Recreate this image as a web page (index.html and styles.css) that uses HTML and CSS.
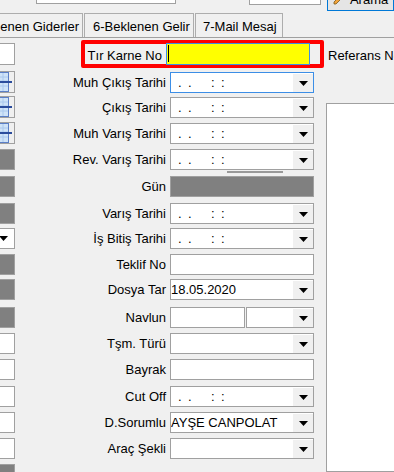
FILE: index.html
```html
<!DOCTYPE html>
<html lang="tr">
<head>
    <meta charset="UTF-8">
    <meta name="viewport" content="width=device-width, initial-scale=1.0">
    <title>Dosya Kartı</title>
    <link rel="stylesheet" href="styles.css">
</head>
<body>
<div class="toolbar">
    <div class="tb-box tb-wide"></div>
    <div class="tb-box tb-small"></div>
    <button class="tb-btn">
        <svg width="10" height="10" viewBox="0 0 10 10"><path d="M1 9 L3 9 L9 3 L7 1 L1 7 Z" fill="#f2a33a" stroke="#7a5a20" stroke-width="0.8"/></svg>
        <span>Arama</span>
    </button>
</div>

<div class="tabs">
    <div class="tab tab-first">5-Beklenen Giderler</div>
    <div class="tab tab-gelir">6-Beklenen Gelir</div>
    <div class="tab tab-mail">7-Mail Mesaj</div>
</div>

<div class="panel">
    <div class="form">
        <!-- 1 -->
        <div class="row h29">
            <div class="lb lb-white tall"></div>
            <div class="highlight">
                <div class="lbl">Tır Karne No</div>
                <div class="txt active"><span class="caret"></span></div>
            </div>
        </div>
        <!-- 2 -->
        <div class="row h25">
            <div class="lb lb-icon tall">
                <svg width="14" height="20" viewBox="0 0 14 20"><rect x="-4" y="0.5" width="12.5" height="19" fill="#cfe3f8" stroke="#5b7fc7"/><path d="M0 5h8M0 9h8M0 14h8M3 1v18" stroke="#aac8ee"/><rect x="0" y="9" width="12" height="2" fill="#2b4c9c"/></svg>
            </div>
            <div class="lbl">Muh Çıkış Tarihi</div>
            <div class="combo focus"><span class="val mask"><i>.</i><i>.</i><i>:</i><i>:</i></span><span class="btn"><svg width="9" height="5" viewBox="0 0 9 5"><polygon points="0,0 9,0 4.5,5" fill="#000"/></svg></span></div>
        </div>
        <!-- 3 -->
        <div class="row">
            <div class="lb lb-icon tall">
                <svg width="14" height="20" viewBox="0 0 14 20"><rect x="-4" y="0.5" width="12.5" height="19" fill="#cfe3f8" stroke="#5b7fc7"/><path d="M0 5h8M0 9h8M0 14h8M3 1v18" stroke="#aac8ee"/><rect x="0" y="9" width="12" height="2" fill="#2b4c9c"/></svg>
            </div>
            <div class="lbl">Çıkış Tarihi</div>
            <div class="combo"><span class="val mask"><i>.</i><i>.</i><i>:</i><i>:</i></span><span class="btn"><svg width="9" height="5" viewBox="0 0 9 5"><polygon points="0,0 9,0 4.5,5" fill="#000"/></svg></span></div>
        </div>
        <!-- 4 -->
        <div class="row">
            <div class="lb lb-icon tall">
                <svg width="14" height="20" viewBox="0 0 14 20"><rect x="-4" y="0.5" width="12.5" height="19" fill="#cfe3f8" stroke="#5b7fc7"/><path d="M0 5h8M0 9h8M0 14h8M3 1v18" stroke="#aac8ee"/><rect x="0" y="9" width="12" height="2" fill="#2b4c9c"/></svg>
            </div>
            <div class="lbl">Muh Varış Tarihi</div>
            <div class="combo"><span class="val mask"><i>.</i><i>.</i><i>:</i><i>:</i></span><span class="btn"><svg width="9" height="5" viewBox="0 0 9 5"><polygon points="0,0 9,0 4.5,5" fill="#000"/></svg></span></div>
        </div>
        <!-- 5 -->
        <div class="row h27">
            <div class="lb lb-grey"></div>
            <div class="lbl">Rev. Varış Tarihi</div>
            <div class="stack">
                <div class="combo"><span class="val mask"><i>.</i><i>.</i><i>:</i><i>:</i></span><span class="btn"><svg width="9" height="5" viewBox="0 0 9 5"><polygon points="0,0 9,0 4.5,5" fill="#000"/></svg></span></div>
                <div class="under-bar"></div>
            </div>
        </div>
        <!-- 6 -->
        <div class="row h27">
            <div class="lb lb-grey"></div>
            <div class="lbl">Gün</div>
            <div class="txt grey"></div>
        </div>
        <!-- 7 -->
        <div class="row h25">
            <div class="lb lb-grey"></div>
            <div class="lbl">Varış Tarihi</div>
            <div class="combo"><span class="val mask"><i>.</i><i>.</i><i>:</i><i>:</i></span><span class="btn"><svg width="9" height="5" viewBox="0 0 9 5"><polygon points="0,0 9,0 4.5,5" fill="#000"/></svg></span></div>
        </div>
        <!-- 8 -->
        <div class="row">
            <div class="lb lb-drop"><svg width="9" height="5" viewBox="0 0 9 5"><polygon points="0,0 9,0 4.5,5" fill="#000"/></svg></div>
            <div class="lbl">İş Bitiş Tarihi</div>
            <div class="combo"><span class="val mask"><i>.</i><i>.</i><i>:</i><i>:</i></span><span class="btn"><svg width="9" height="5" viewBox="0 0 9 5"><polygon points="0,0 9,0 4.5,5" fill="#000"/></svg></span></div>
        </div>
        <!-- 9 -->
        <div class="row h25">
            <div class="lb lb-grey"></div>
            <div class="lbl">Teklif No</div>
            <div class="txt"></div>
        </div>
        <!-- 10 -->
        <div class="row h28">
            <div class="lb lb-grey"></div>
            <div class="lbl">Dosya Tar</div>
            <div class="combo"><span class="val">18.05.2020</span><span class="btn"><svg width="9" height="5" viewBox="0 0 9 5"><polygon points="0,0 9,0 4.5,5" fill="#000"/></svg></span></div>
        </div>
        <!-- 11 -->
        <div class="row">
            <div class="lb lb-grey"></div>
            <div class="lbl">Navlun</div>
            <div class="txt navlun"></div>
            <div class="combo currency"><span class="val"></span><span class="btn"><svg width="9" height="5" viewBox="0 0 9 5"><polygon points="0,0 9,0 4.5,5" fill="#000"/></svg></span></div>
        </div>
        <!-- 12 -->
        <div class="row">
            <div class="lb lb-white"></div>
            <div class="lbl">Tşm. Türü</div>
            <div class="combo"><span class="val"></span><span class="btn"><svg width="9" height="5" viewBox="0 0 9 5"><polygon points="0,0 9,0 4.5,5" fill="#000"/></svg></span></div>
        </div>
        <!-- 13 -->
        <div class="row h27">
            <div class="lb lb-white"></div>
            <div class="lbl">Bayrak</div>
            <div class="txt"></div>
        </div>
        <!-- 14 -->
        <div class="row">
            <div class="lb lb-white"></div>
            <div class="lbl">Cut Off</div>
            <div class="combo"><span class="val mask"><i>.</i><i>.</i><i>:</i><i>:</i></span><span class="btn"><svg width="9" height="5" viewBox="0 0 9 5"><polygon points="0,0 9,0 4.5,5" fill="#000"/></svg></span></div>
        </div>
        <!-- 15 -->
        <div class="row">
            <div class="lb lb-white"></div>
            <div class="lbl">D.Sorumlu</div>
            <div class="combo"><span class="val">AYŞE CANPOLAT</span><span class="btn"><svg width="9" height="5" viewBox="0 0 9 5"><polygon points="0,0 9,0 4.5,5" fill="#000"/></svg></span></div>
        </div>
        <!-- 16 -->
        <div class="row">
            <div class="lb lb-white"></div>
            <div class="lbl">Araç Şekli</div>
            <div class="combo"><span class="val"></span><span class="btn"><svg width="9" height="5" viewBox="0 0 9 5"><polygon points="0,0 9,0 4.5,5" fill="#000"/></svg></span></div>
        </div>
        <!-- 17 -->
        <div class="row">
            <div class="lb lb-grey"></div>
        </div>
    </div>

    <div class="side">
        <div class="side-lbl">Referans No</div>
        <div class="memo"></div>
    </div>
</div>
</body>
</html>
```

FILE: styles.css
```css
body {
    margin: 0;
    height: 472px;
    overflow: hidden;
    background-color: #f0f0f0;
    font-family: "Liberation Sans", Arial, sans-serif;
    font-size: 13px;
    color: #000;
}

/* ust arac cubugu (ustu kesik) */
.toolbar {
    display: flex;
    align-items: flex-start;
    height: 13px;
}
.tb-box {
    box-sizing: border-box;
    height: 23px;
    background-color: #fff;
    border: 1px solid #a0a0a0;
}
.tb-wide {
    margin: -19px 0 0 36px;
    width: 147px;
}
.tb-small {
    margin: -18px 0 0 73px;
    width: 75px;
}
.tb-btn {
    box-sizing: border-box;
    display: flex;
    align-items: flex-end;
    margin: -17px 0 0 6px;
    width: 70px;
    height: 28px;
    padding: 0 0 0 5px;
    background-color: #e5e5e5;
    border: 1px solid #0078d7;
    font: inherit;
    color: #000;
}
.tb-btn svg {
    margin-bottom: 5px;
}
.tb-btn span {
    margin: 0 0 3px 7px;
    line-height: 15px;
}

/* sekmeler */
.tabs {
    display: flex;
    height: 24px;
}
.tab {
    box-sizing: border-box;
    height: 24px;
    padding-top: 3px;
    line-height: 20px;
    border: 1px solid #adadad;
    border-bottom: none;
    white-space: nowrap;
    overflow: hidden;
}
.tab-first {
    width: 130px;
    margin-left: -47px;
    text-align: right;
    padding-right: 3px;
}
.tab-gelir {
    width: 110px;
    margin-left: 1px;
    padding-left: 8px;
}
.tab-mail {
    width: 88px;
    margin-left: 1px;
    padding-left: 7px;
}

.panel {
    display: flex;
    border-top: 1px solid #a0a0a0;
    padding-top: 5px;
}

/* form satirlari */
.form {
    width: 326px;
    flex: none;
}
.row {
    display: flex;
    align-items: flex-start;
    height: 26px;
}
.row.h25 { height: 25px; }
.row.h27 { height: 27px; }
.row.h28 { height: 28px; }
.row.h29 { height: 29px; }

.lb {
    box-sizing: border-box;
    width: 46px;
    height: 21px;
    margin-left: -31px;
    border: 1px solid #a0a0a0;
    display: flex;
    align-items: center;
    justify-content: flex-end;
}
.lb.tall {
    height: 22px;
}
.lb-icon.tall {
    margin-top: -1px;
}
.lb-white { background-color: #fff; }
.lb-grey { background-color: #808080; }
.lb-icon { background-color: #f0f0f0; }
.lb-drop { background-color: #fff; }
.lb-drop svg { margin-right: 6px; }

.lbl {
    box-sizing: border-box;
    width: 155px;
    padding-right: 4px;
    text-align: right;
    line-height: 21px;
    white-space: nowrap;
}

.highlight {
    display: flex;
    align-items: flex-start;
    box-sizing: border-box;
    width: 243px;
    height: 28px;
    margin: -3px 0 0 66px;
    border: 4px solid #ff0000;
    border-radius: 2px;
}
.highlight .lbl {
    width: 81px;
    padding-top: 1px;
}
.highlight .txt {
    height: 22px;
    margin-top: -1px;
}

.txt, .combo {
    box-sizing: border-box;
    width: 144px;
    height: 21px;
    background-color: #fff;
    border: 1px solid #a0a0a0;
}
.txt.grey {
    background-color: #808080;
}
.txt.active {
    background-color: #ffff00;
    border-color: #3c8ee6;
}
.caret {
    display: block;
    width: 1px;
    height: 17px;
    margin: 1px 0 0 1px;
    background-color: #000;
}
.txt.navlun {
    width: 75px;
}
.combo.currency {
    width: 68px;
    margin-left: 1px;
}

.combo {
    display: flex;
}
.combo.focus {
    border-color: #3c8ee6;
}
.combo .val {
    flex: 1;
    line-height: 19px;
    white-space: nowrap;
    overflow: hidden;
}
.combo .btn {
    width: 20px;
    height: 18px;
    margin-top: 1px;
    background-color: #f0f0f0;
    display: flex;
    align-items: center;
    justify-content: center;
}

/* bos tarih maskesi  . .  : : */
.mask {
    display: flex;
    padding-left: 7px;
}
.mask i {
    font-style: normal;
    width: 10px;
}
.mask i:nth-child(3) {
    margin-left: 13px;
}

.stack {
    display: flex;
    flex-direction: column;
}
.under-bar {
    width: 56px;
    height: 2px;
    margin: 1px 0 0 57px;
    background-color: #999;
}

/* sag taraf */
.side {
    flex: 1;
}
.side-lbl {
    padding: 2px 0 0 2px;
    line-height: 21px;
    white-space: nowrap;
}
.memo {
    box-sizing: border-box;
    width: 100px;
    height: 369px;
    margin-top: 37px;
    background-color: #fff;
    border: 1px solid #a0a0a0;
}
```
